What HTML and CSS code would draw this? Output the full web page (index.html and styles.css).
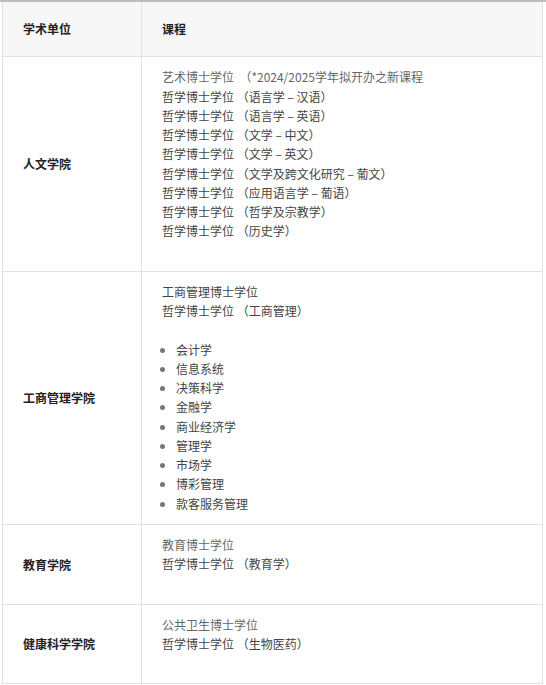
FILE: index.html
```html
<!DOCTYPE html>
<html lang="zh-CN">
<head>
<meta charset="utf-8">
<title>课程</title>
<link rel="stylesheet" href="styles.css">
</head>
<body>
<div class="topbar"></div>
<table class="programs">
  <thead>
    <tr>
      <th class="unit">学术单位</th>
      <th class="course">课程</th>
    </tr>
  </thead>
  <tbody>
    <tr>
      <td class="unit">人文学院</td>
      <td class="course">
        <p><span class="light">艺术博士学位 &nbsp;（*2024/2025学年拟开办之新课程</span><br>
        哲学博士学位 （语言学 – 汉语）<br>
        哲学博士学位 （语言学 – 英语）<br>
        哲学博士学位 （文学 – 中文）<br>
        哲学博士学位 （文学 – 英文）<br>
        哲学博士学位 （文学及跨文化研究 – 葡文）<br>
        哲学博士学位 （应用语言学 – 葡语）<br>
        哲学博士学位 （哲学及宗教学）<br>
        哲学博士学位 （历史学）</p>
      </td>
    </tr>
    <tr>
      <td class="unit">工商管理学院</td>
      <td class="course">
        <p>工商管理博士学位<br>
        哲学博士学位 （工商管理）</p>
        <ul>
          <li>会计学</li>
          <li>信息系统</li>
          <li>决策科学</li>
          <li>金融学</li>
          <li>商业经济学</li>
          <li>管理学</li>
          <li>市场学</li>
          <li>博彩管理</li>
          <li>款客服务管理</li>
        </ul>
      </td>
    </tr>
    <tr>
      <td class="unit">教育学院</td>
      <td class="course">
        <p><span class="light">教育博士学位</span><br>
        哲学博士学位 （教育学）</p>
      </td>
    </tr>
    <tr>
      <td class="unit">健康科学学院</td>
      <td class="course">
        <p><span class="light">公共卫生博士学位</span><br>
        哲学博士学位 （生物医药）</p>
      </td>
    </tr>
  </tbody>
</table>
</body>
</html>
```
FILE: styles.css
```css
html, body {
  margin: 0;
  padding: 0;
  background: #ffffff;
}
body {
  font-family: "Noto Sans CJK SC", "Noto Sans", sans-serif;
  font-size: 12px;
  line-height: 19.25px;
  color: #444444;
}
.topbar {
  height: 2px;
  background: #bdbdbd;
}
.programs {
  margin-left: 2px;
  width: 541px;
  border-collapse: collapse;
  table-layout: fixed;
}
.programs th,
.programs td {
  border: 1px solid #e1e1e1;
  text-align: left;
  vertical-align: top;
}
.programs thead th {
  background: #f7f7f7;
  font-weight: bold;
  color: #222222;
  padding: 17px 20px 18px;
  border-top: none;
}
.programs th.unit {
  width: 98px;
}
.programs td.unit {
  vertical-align: middle;
  font-weight: bold;
  color: #222222;
  padding: 10px 20px;
}
.programs td.course {
  padding: 10px 20px 11px;
}
.course p {
  margin: 0 0 19.25px;
}
.course ul {
  margin: 0;
  padding-left: 14px;
  list-style: disc;
}
.course li::marker {
  color: #777777;
}
.light {
  color: #666666;
}
```
